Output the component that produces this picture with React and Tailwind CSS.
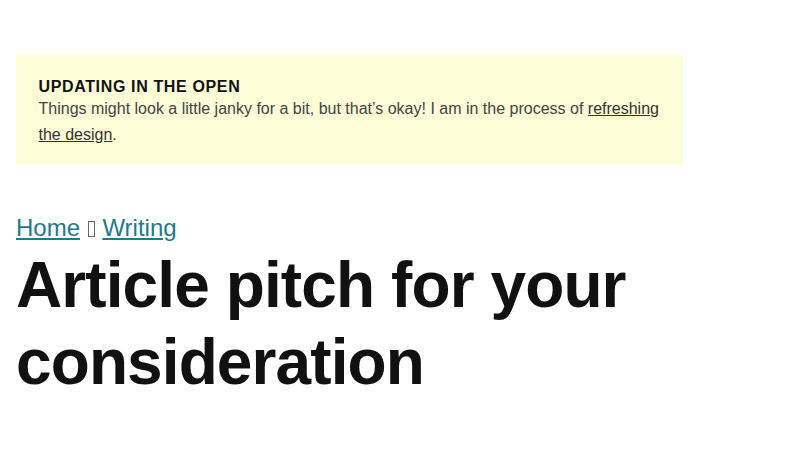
const App = () => {
  return (
    <div className="min-h-screen bg-white px-4 pt-[55px] font-['Liberation_Sans',Arial,sans-serif]">
      <div className="w-[667px] bg-[#fdfdd8] pt-[23px] pb-4 px-[22.5px]">
        <h2 className="text-base leading-[18px] font-bold tracking-[0.04em] text-[#111]">
          UPDATING IN THE OPEN
        </h2>
        <p className="text-base leading-[26px] text-[#444]">
          Things might look a little janky for a bit, but that’s okay! I am in the process of{' '}
          <a href="#" className="underline text-[#333]">
            refreshing the design
          </a>
          .
        </p>
      </div>

      <nav className="mt-[46px] text-2xl leading-9">
        <a href="#" className="underline text-[#1f7a8c]">
          Home
        </a>{' '}
        <span className="inline-block w-[7px] h-[16px] border border-[#666] align-[-1px] mx-px"></span>{' '}
        <a href="#" className="underline text-[#1f7a8c]">
          Writing
        </a>
      </nav>

      <h1 className="mt-px text-[64px] leading-[77px] font-bold text-[#111] tracking-[-0.9px]">
        Article pitch for your
        <br />
        consideration
      </h1>
    </div>
  );
};

export default App;
